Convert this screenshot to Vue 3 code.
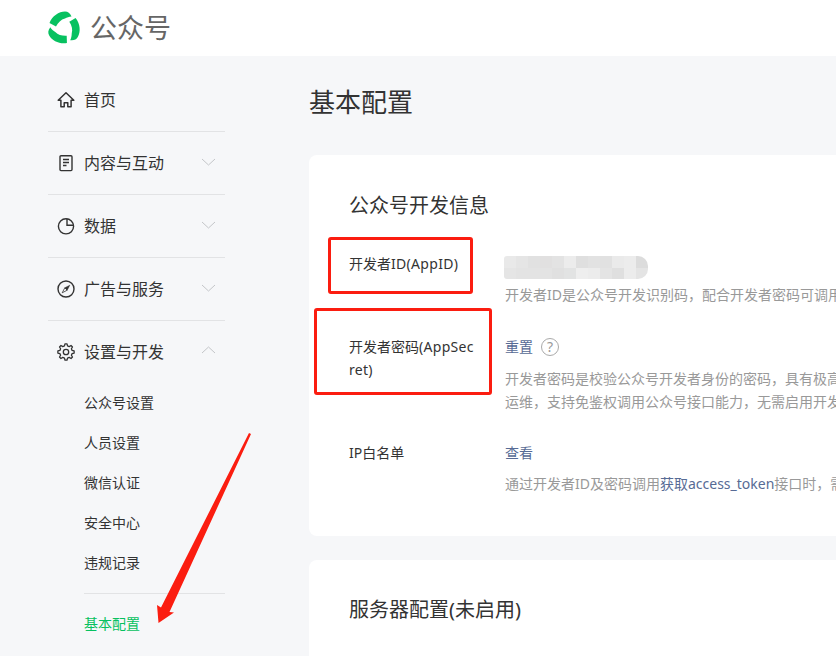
<script setup>
const navItems = [
  { label: '内容与互动', icon: 'doc' },
  { label: '数据', icon: 'pie' },
  { label: '广告与服务', icon: 'compass' }
]
const subItems = ['公众号设置', '人员设置', '微信认证', '安全中心', '违规记录']
const mosaic = [
  '#e9e9e9', '#e5e5e5', '#e1e1e1', '#e1e0e0', '#e3e3e3', '#ececec', '#dfdfdf', '#e2e2e2', '#e1e1e1', '#eaeaea', '#ececec', '#dcdcdc',
  '#e5e5e5', '#e3e3e3', '#e3e3e3', '#e3e3e3', '#e0e0e0', '#e2e3e3', '#eeeeee', '#ececec', '#e4e4e4', '#dfdfdf', '#ececec', '#e4e4e4'
]

function buildGear() {
  const teeth = 8
  const pts = []
  for (let i = 0; i < teeth; i++) {
    const a = (i / teeth) * Math.PI * 2
    const step = Math.PI / teeth
    const spec = [
      [6.3, a - step * 0.62],
      [8.2, a - step * 0.32],
      [8.2, a + step * 0.32],
      [6.3, a + step * 0.62]
    ]
    for (const [r, t] of spec) {
      pts.push(`${(9 + r * Math.cos(t)).toFixed(2)} ${(9 + r * Math.sin(t)).toFixed(2)}`)
    }
  }
  return 'M' + pts.join('L') + 'Z'
}
const gearPath = buildGear()
const blades = [0, 120, 240]
</script>

<template>
  <div class="page">
    <header class="topbar">
      <svg class="logo" width="36" height="36" viewBox="-18 -18 36 36">
        <path
          v-for="deg in blades"
          :key="deg"
          fill="#07c160"
          :transform="`rotate(${deg})`"
          d="M-14.500 -5C-12 -12 -5 -16.500 1 -16.500C4 -16.500 6 -15 7.500 -11.500C5 -11.500 3 -10.500 1 -9.500C-3 -8.500 -6 -5.500 -8 -1.500Z"
        />
        <path fill="#07c160" d="M-3 8.500L-8.500 6.500L-6 12Z"/>
      </svg>
      <span class="brand">公众号</span>
    </header>

    <div class="body">
      <aside class="sidebar">
        <div class="nav-row">
          <svg class="nav-icon" viewBox="0 0 18 18" fill="none" stroke="#333" stroke-width="1.500">
            <path d="M1.200 9.200L9 1.800l7.800 7.400h-2.700v6.600h-3.300v-4H7.200v4H3.900V9.200z" stroke-linejoin="round"/>
          </svg>
          <span class="nav-label">首页</span>
        </div>

        <div v-for="item in navItems" :key="item.label" class="nav-row">
          <svg class="nav-icon" viewBox="0 0 18 18" fill="none" stroke="#333" stroke-width="1.400">
            <template v-if="item.icon === 'doc'">
              <rect x="3" y="1.800" width="12" height="14.800" rx="1"/>
              <path d="M6 5.500h6M6 8.500h6M6 11.500h3.500"/>
            </template>
            <template v-else-if="item.icon === 'pie'">
              <circle cx="9" cy="9.300" r="7.600"/>
              <path d="M10 1.700v6.600h6.500"/>
            </template>
            <template v-else>
              <circle cx="9" cy="9" r="8"/>
              <path d="M12.800 5.200L10.200 10.200 7.800 7.800z" fill="#333" stroke-width="0.500"/>
              <path d="M5.200 12.800L7.800 7.800 10.200 10.200z" stroke-width="0.800"/>
            </template>
          </svg>
          <span class="nav-label">{{ item.label }}</span>
          <svg class="chevron" width="15" height="8" viewBox="0 0 15 8" fill="none" stroke="#c4c6c9" stroke-width="1">
            <path d="M1 1l6.500 6L14 1"/>
          </svg>
        </div>

        <div class="nav-row nav-row-open">
          <svg class="nav-icon" viewBox="0 0 18 18" fill="none" stroke="#333" stroke-width="1.300">
            <path :d="gearPath" stroke-linejoin="round"/>
            <circle cx="9" cy="9" r="2.700"/>
          </svg>
          <span class="nav-label">设置与开发</span>
          <svg class="chevron" width="15" height="8" viewBox="0 0 15 8" fill="none" stroke="#c4c6c9" stroke-width="1">
            <path d="M1 7l6.500-6L14 7"/>
          </svg>
        </div>

        <ul class="sub-list">
          <li v-for="sub in subItems" :key="sub">{{ sub }}</li>
        </ul>
        <div class="sub-active">基本配置</div>
      </aside>

      <main class="main">
        <h1 class="page-title">基本配置</h1>

        <section class="card card-first">
          <h2 class="card-title">公众号开发信息</h2>

          <div class="row row-id">
            <div class="label">开发者<span class="latin">ID(AppID)</span></div>
            <div class="value">
              <div class="mosaic">
                <i v-for="(c, i) in mosaic" :key="i" :style="{ background: c }"></i>
              </div>
              <p class="desc">开发者ID是公众号开发识别码，配合开发者密码可调用公众号</p>
            </div>
          </div>

          <div class="row row-secret">
            <div class="label">开发者密码<span class="latin">(AppSecret)</span></div>
            <div class="value">
              <div class="action">
                <a class="link">重置</a>
                <span class="help">?</span>
              </div>
              <p class="desc">开发者密码是校验公众号开发者身份的密码，具有极高的</p>
              <p class="desc">运维，支持免鉴权调用公众号接口能力，无需启用开发者</p>
            </div>
          </div>

          <div class="row row-ip">
            <div class="label">IP白名单</div>
            <div class="value">
              <a class="link">查看</a>
              <p class="desc desc-ip">通过开发者ID及密码调用<a class="link">获取access_token</a>接口时，需要</p>
            </div>
          </div>
        </section>

        <section class="card card-second">
          <h2 class="card-title">服务器配置(未启用)</h2>
        </section>
      </main>
    </div>

    <div class="mark mark-id"></div>
    <div class="mark mark-secret"></div>
    <svg class="arrow" width="836" height="656" viewBox="0 0 836 656">
      <polygon fill="#fb1d10" points="249,433 251,434 169.500,612 174,612.500 158.500,623 157,605 161,607.500"/>
    </svg>
  </div>
</template>

<style scoped>
.page {
  position: relative;
  width: 836px;
  height: 656px;
  overflow: hidden;
  background: #f6f7f9;
  font-family: "Noto Sans", "Noto Sans CJK SC", sans-serif;
  color: #333;
}
.topbar {
  height: 56px;
  background: #fff;
  display: flex;
  align-items: center;
  padding-left: 46px;
  box-sizing: border-box;
}
.logo {
  flex: none;
}
.brand {
  margin-left: 8px;
  font-size: 27px;
  line-height: 56px;
  color: #666;
}
.body {
  display: flex;
}
.sidebar {
  width: 177px;
  margin-left: 48px;
  flex: none;
  padding-top: 13px;
}
.nav-row {
  height: 63px;
  box-sizing: border-box;
  display: flex;
  align-items: center;
  border-bottom: 1px solid #e2e3e5;
  padding: 0 9px;
}
.nav-row-open {
  border-bottom: 0;
  padding-bottom: 2px;
}
.nav-icon {
  width: 18px;
  height: 18px;
  flex: none;
}
.nav-label {
  margin-left: 9px;
  font-size: 16px;
  line-height: 24px;
  color: #333;
  flex: 1;
}
.chevron {
  flex: none;
  margin-top: -3px;
}
.sub-list {
  list-style: none;
  margin: -1px 0 0;
  padding: 0 0 10px 36px;
}
.sub-list li {
  height: 40px;
  line-height: 40px;
  font-size: 14px;
  color: #333;
}
.sub-active {
  margin-left: 36px;
  padding-top: 10px;
  border-top: 1px solid #e2e3e5;
  font-size: 14px;
  line-height: 40px;
  color: #07c160;
}
.main {
  margin-left: 84px;
  width: 700px;
  flex: none;
}
.page-title {
  margin: 0;
  height: 99px;
  font-size: 26px;
  font-weight: 400;
  line-height: 92px;
  color: #333;
}
.card {
  background: #fff;
  border-radius: 8px;
  padding: 0 40px;
}
.card-first {
  height: 381px;
  padding-top: 35px;
  box-sizing: border-box;
  margin-bottom: 24px;
}
.card-second {
  height: 200px;
  padding-top: 34px;
  box-sizing: border-box;
}
.card-title {
  margin: 0;
  font-size: 20px;
  font-weight: 400;
  line-height: 32px;
  color: #333;
}
.row {
  display: flex;
  font-size: 14px;
  line-height: 24px;
}
.row-id {
  margin-top: 30px;
}
.row-secret {
  margin-top: 29px;
}
.row-ip {
  margin-top: 28px;
}
.label {
  width: 127px;
  margin-right: 29px;
  flex: none;
  word-break: break-all;
  line-height: 23px;
  color: #333;
}
.latin {
  letter-spacing: 0.3px;
}
.value {
  width: 640px;
  flex: none;
  min-width: 0;
}
.mosaic {
  width: 144px;
  height: 23px;
  margin: 4px 0 0 -1px;
  display: grid;
  grid-template-columns: repeat(12, 12px);
  grid-template-rows: repeat(2, 11.5px);
  border-radius: 3px 10px 10px 3px;
  overflow: hidden;
}
.desc {
  margin: 0;
  font-size: 14px;
  line-height: 22px;
  color: #999;
  white-space: nowrap;
}
.row-id .desc {
  margin-top: 5px;
}
.row-secret .desc {
  line-height: 23px;
}
.action {
  display: flex;
  align-items: center;
  height: 24px;
}
.action + .desc {
  margin-top: 8px;
}
.desc-ip {
  margin-top: 8px;
}
.link {
  color: #576b95;
}
.help {
  margin-left: 8px;
  width: 16px;
  height: 16px;
  border: 1px solid #aaa;
  border-radius: 50%;
  font-size: 14px;
  line-height: 16px;
  text-align: center;
  color: #999;
}
.mark {
  position: absolute;
  box-sizing: border-box;
  border: 3px solid #fb1d10;
  border-radius: 3px;
}
.mark-id {
  left: 328px;
  top: 237px;
  width: 145px;
  height: 57px;
}
.mark-secret {
  left: 314px;
  top: 308px;
  width: 178px;
  height: 87px;
}
.arrow {
  position: absolute;
  left: 0;
  top: 0;
  pointer-events: none;
}
</style>
